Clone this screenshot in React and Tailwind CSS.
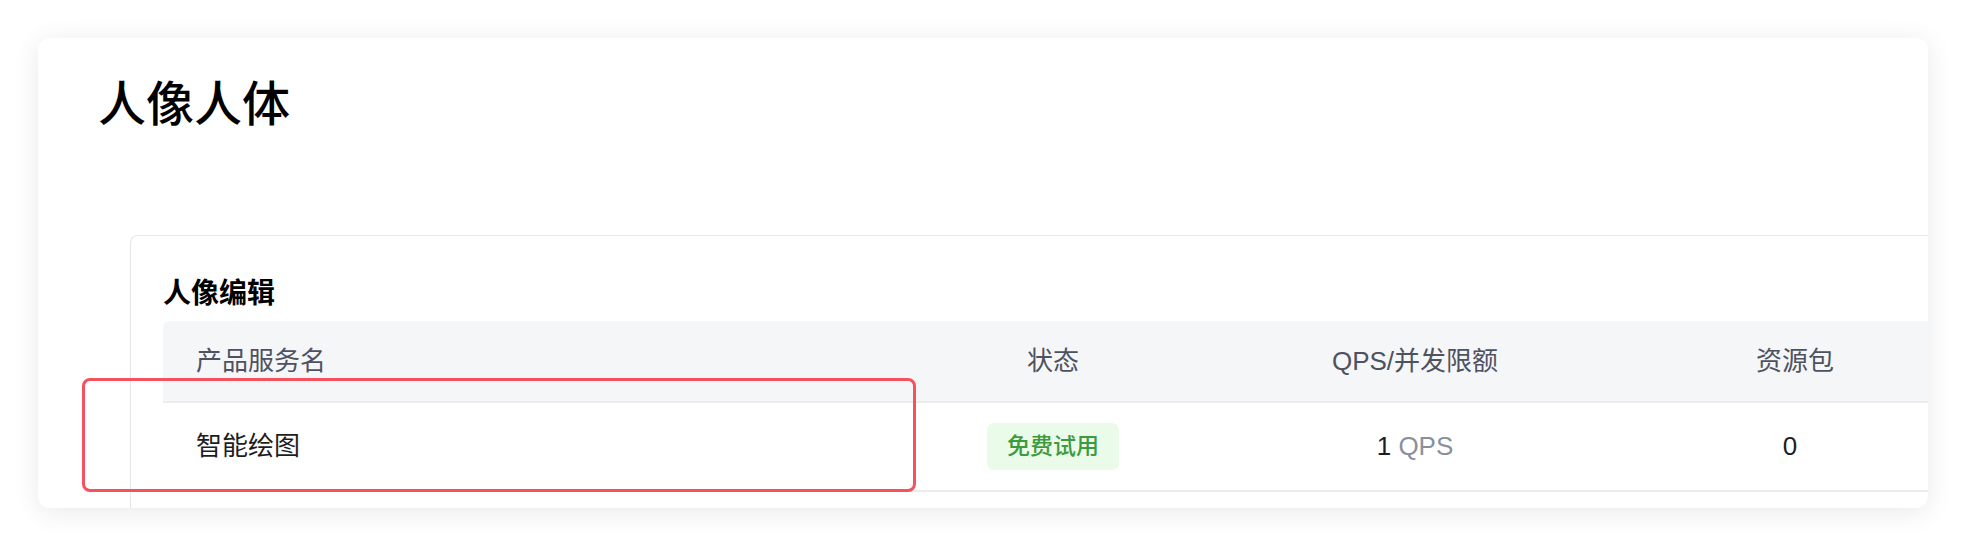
export default function App() {
  const font = { fontFamily: '"Liberation Sans", "Noto Sans CJK SC", sans-serif' };
  return (
    <div className="w-[1966px] h-[546px] bg-white p-[38px]" style={font}>
      <div className="relative h-full rounded-[12px] bg-white shadow-[0_4px_28px_rgba(0,0,0,0.09)] overflow-hidden">
        <div className="pl-[60px] pt-[35px]">
          <h1 className="text-[48px] leading-[64px] font-medium text-black">人像人体</h1>
        </div>
        <div className="ml-[92px] mt-[98px] w-[2000px] border-l border-t border-[#e6e7ec] rounded-tl-[8px] pl-[32px] pt-[38px] h-[400px]">
          <div className="text-[28px] leading-[40px] font-semibold text-black mb-[7px]">人像编辑</div>
          <div className="grid grid-cols-[717px_346px_378px_382px_200px] h-[82px] bg-[#f5f6f8] border-b-2 border-[#ebecf0] rounded-tl-[6px] text-[26px] text-[#4e5260] items-center">
            <div className="pl-[33px]">产品服务名</div>
            <div className="text-center">状态</div>
            <div className="text-center">QPS/并发限额</div>
            <div className="text-center">资源包</div>
            <div />
          </div>
          <div className="grid grid-cols-[717px_346px_378px_382px_200px] h-[89px] border-b-2 border-[#ebecf0] text-[26px] text-[#1d1d1f] items-center">
            <div className="pl-[33px]">智能绘图</div>
            <div className="flex justify-center">
              <span className="flex items-center h-[47px] px-[20px] rounded-[7px] bg-[#eafbea] text-[#3d9a3d] text-[23px] font-medium">免费试用</span>
            </div>
            <div className="text-center">
              1 <span className="text-[#8a8f9c]">QPS</span>
            </div>
            <div className="text-center pr-[10px]">0</div>
            <div />
          </div>
        </div>
        <div className="absolute left-[44px] top-[340px] w-[834px] h-[114px] border-[3px] border-[#f5515f] rounded-[8px]" />
      </div>
    </div>
  );
}
